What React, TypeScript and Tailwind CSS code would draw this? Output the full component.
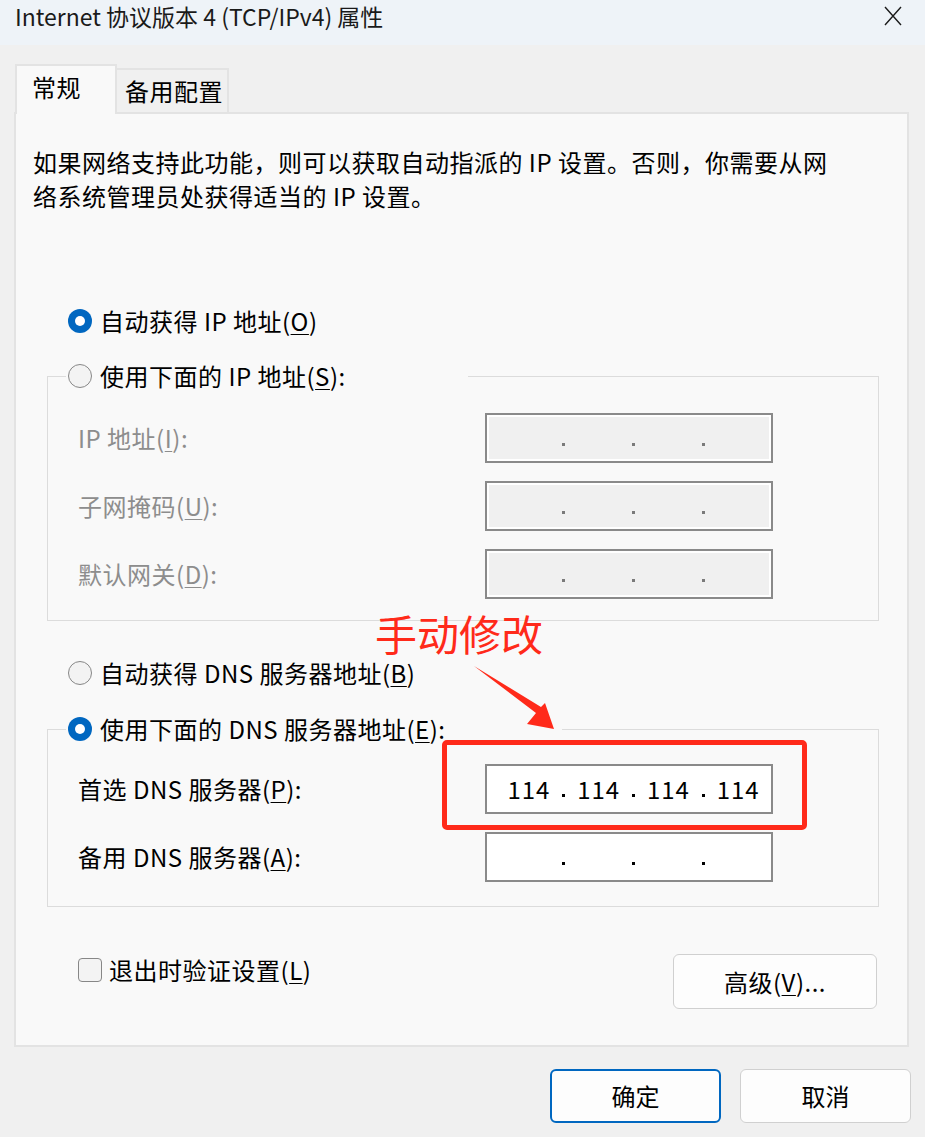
import React from "react";

const font = "font-['Noto_Sans_CJK_SC','Noto_Sans',sans-serif]";

function Radio({ checked }: { checked?: boolean }) {
  if (checked) {
    return (
      <span className="flex h-[24px] w-[24px] shrink-0 items-center justify-center rounded-full bg-[#0067c0]">
        <span className="h-[10px] w-[10px] rounded-full bg-white" />
      </span>
    );
  }
  return <span className="h-[24px] w-[24px] shrink-0 rounded-full border-[1.5px] border-[#878787] bg-[#f3f3f3]" />;
}

function Mn({ c }: { c: string }) {
  return <span className="underline underline-offset-[3px] decoration-1">{c}</span>;
}

function IpInput({ values, disabled }: { values?: string[]; disabled?: boolean }) {
  const v = values ?? ["", "", "", ""];
  return (
    <div
      className={
        disabled
          ? "flex h-[50px] w-[288px] items-center border-2 border-[#8a8a8a] bg-[#f0f0f0] pl-[9px] shadow-[inset_0_0_0_2px_#ffffff]"
          : "flex h-[50px] w-[288px] items-center border-2 border-[#8a8a8a] bg-white pl-[9px]"
      }
    >
      {v.map((o, i) => (
        <React.Fragment key={i}>
          <span className="w-[66px] text-center text-[24px] leading-none tracking-[1px] text-black">{o}</span>
          {i < 3 && (
            <span className="flex w-[4px] justify-center pt-[12px]">
              <span className={disabled ? "h-[3px] w-[3px] bg-[#7a7a7a]" : "h-[3px] w-[3px] bg-black"} />
            </span>
          )}
        </React.Fragment>
      ))}
    </div>
  );
}

function Row({ label, disabled, values }: { label: React.ReactNode; disabled?: boolean; values?: string[] }) {
  return (
    <div className="flex h-[50px] items-center pl-[30px]">
      <span className={disabled ? "w-[407px] text-[#8d8d8d]" : "w-[407px] text-black"}>{label}</span>
      <IpInput disabled={disabled} values={values} />
    </div>
  );
}

function Button({ children, primary, className }: { children: React.ReactNode; primary?: boolean; className?: string }) {
  return (
    <div
      className={
        (primary
          ? "border-2 border-[#0067c0] "
          : "border border-[#d0d0d0] ") +
        "flex items-center justify-center rounded-[6px] bg-[#fdfdfd] text-black " +
        (className ?? "")
      }
    >
      {children}
    </div>
  );
}

export default function App() {
  return (
    <div className={`relative h-[1137px] w-[925px] overflow-hidden bg-[#f0f0f0] text-[24px] text-black ${font}`}>
      {/* title bar */}
      <div className="flex h-[45px] items-start justify-between bg-[#eef3f8] pl-[15px] pr-[22px]">
        <span className="text-[23px] leading-[32px] text-[#1a1a1a]">Internet 协议版本 4 (TCP/IPv4) 属性</span>
        <svg width="20" height="20" viewBox="0 0 20 20" className="mt-[6px]">
          <path d="M2 1 L18 19 M18 1 L2 19" stroke="#1a1a1a" strokeWidth="1.4" fill="none" />
        </svg>
      </div>

      <div className="pl-[14px] tracking-[0.5px]">
        {/* tabs */}
        <div className="flex h-[67px] items-end pt-[19px]">
          <div className="relative z-10 -mb-[2px] ml-[1px] flex h-[50px] w-[102px] items-start border-2 border-b-0 border-[#e3e3e3] bg-[#f9f9f9] pl-[15px] pt-[6px] leading-[30px]">
            常规
          </div>
          <div className="flex h-[44px] w-[112px] items-start border-2 border-b-0 border-l-0 border-[#e3e3e3] bg-[#f0f0f0] pl-[8px] pt-[6px] leading-[30px]">
            备用配置
          </div>
        </div>

        {/* panel */}
        <div className="h-[935px] w-[895px] border-2 border-[#e3e3e3] bg-[#f9f9f9] pt-[31px]">
          <p className="pl-[17px] leading-[34px]">
            如果网络支持此功能，则可以获取自动指派的 IP 设置。否则，你需要从网
            <br />
            络系统管理员处获得适当的 IP 设置。
          </p>

          <div className="mt-[91px] flex h-[34px] items-center gap-[8px] pl-[52px]">
            <Radio checked />
            <span>
              自动获得 IP 地址(<Mn c="O" />)
            </span>
          </div>

          <fieldset className="ml-[31px] mr-[28px] mt-[21px] border border-[#dcdcdc] pb-[21px]">
            <legend className="ml-[18px] flex h-[34px] w-[402px] items-center gap-[8px] pl-[2px]">
              <Radio />
              <span>
                使用下面的 IP 地址(<Mn c="S" />):
              </span>
            </legend>
            <div className="mt-[20px] flex flex-col gap-[18px]">
              <Row disabled label={<>IP 地址(<Mn c="I" />):</>} />
              <Row disabled label={<>子网掩码(<Mn c="U" />):</>} />
              <Row disabled label={<>默认网关(<Mn c="D" />):</>} />
            </div>
          </fieldset>

          <div className="mt-[35px] flex h-[34px] items-center gap-[8px] pl-[52px]">
            <Radio />
            <span>
              自动获得 DNS 服务器地址(<Mn c="B" />)
            </span>
          </div>

          <fieldset className="ml-[31px] mr-[28px] mt-[22px] border border-[#dcdcdc] pb-[24px]">
            <legend className="ml-[18px] flex h-[34px] w-[496px] items-center gap-[8px] pl-[2px]">
              <Radio checked />
              <span>
                使用下面的 DNS 服务器地址(<Mn c="E" />):
              </span>
            </legend>
            <div className="mt-[18px] flex flex-col gap-[18px]">
              <Row label={<>首选 DNS 服务器(<Mn c="P" />):</>} values={["114", "114", "114", "114"]} />
              <Row label={<>备用 DNS 服务器(<Mn c="A" />):</>} />
            </div>
          </fieldset>

          <div className="mt-[47px] flex h-[55px] items-start justify-between pl-[62px] pr-[30px]">
            <div className="mt-[2px] flex h-[28px] items-center gap-[7px]">
              <span className="h-[24px] w-[24px] rounded-[4px] border-[1.5px] border-[#878787] bg-[#f3f3f3]" />
              <span>
                退出时验证设置(<Mn c="L" />)
              </span>
            </div>
            <Button className="h-[55px] w-[204px]">
              高级(<Mn c="V" />)...
            </Button>
          </div>
        </div>
      </div>

      {/* dialog buttons */}
      <div className="mt-[22px] flex justify-end gap-[19px] pr-[14px]">
        <Button primary className="h-[54px] w-[171px]">确定</Button>
        <Button className="h-[54px] w-[171px]">取消</Button>
      </div>

      {/* annotation overlay */}
      <div className="absolute left-[375px] top-[612px] text-[42px] leading-[42px] text-[#ff2a1a]">手动修改</div>
      <svg className="absolute left-0 top-0" width="925" height="1137" viewBox="0 0 925 1137">
        <polygon points="474,666 541,707 545,703 554,729 527,724 536,713" fill="#ff2a1a" />
      </svg>
      <div className="absolute left-[442px] top-[740px] h-[90px] w-[365px] rounded-[5px] border-[5px] border-[#ff2a1a]" />
    </div>
  );
}
